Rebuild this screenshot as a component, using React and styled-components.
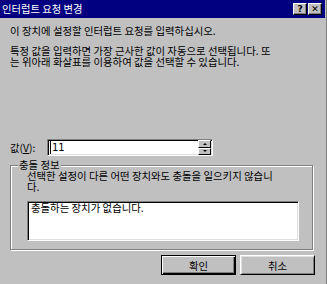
import React from "react"
import styled, { createGlobalStyle } from "styled-components"

const GlobalStyle = createGlobalStyle`
  html, body {
    margin: 0;
    padding: 0;
    background: #c0c0c0;
  }
  * {
    box-sizing: border-box;
  }
`

const font = `"Noto Sans CJK KR", "DejaVu Sans", sans-serif`

const Window = styled.div`
  width: 327px;
  height: 284px;
  background: #c0c0c0;
  border-right: 1px solid #808080;
  display: flex;
  flex-direction: column;
  font-family: ${font};
  font-size: 10.4px;
  color: #000;
  overflow: hidden;
`

const TitleBar = styled.div`
  height: 18px;
  margin-right: 1px;
  background: #000080;
  display: flex;
  align-items: center;
  justify-content: space-between;
  padding: 0 3px 0 2px;
`

const Title = styled.span`
  color: #fff;
  font-size: 10.3px;
  line-height: 18px;
`

const TitleButtons = styled.div`
  display: flex;
  gap: 1px;
`

const TitleButton = styled.div`
  width: 14px;
  height: 12px;
  background: #c0c0c0;
  border-top: 1px solid #fff;
  border-left: 1px solid #fff;
  border-right: 1px solid #000;
  border-bottom: 1px solid #000;
  box-shadow: inset -1px -1px 0 #808080;
  display: flex;
  align-items: center;
  justify-content: center;
  font-family: "DejaVu Sans", sans-serif;
  font-weight: bold;
  font-size: 9px;
  line-height: 1;
  color: #000;
`

const Body = styled.div`
  flex: 1;
  padding: 0 11px 0 10px;
  display: flex;
  flex-direction: column;
`

const Text = styled.p`
  margin: ${p => p.$top}px 0 0;
  line-height: 11px;
  white-space: nowrap;
`

const ValueRow = styled.div`
  margin-top: 72px;
  display: flex;
  align-items: center;
  height: 17px;
`

const ValueLabel = styled.label`
  width: 37px;
  line-height: 17px;

  u {
    text-decoration: underline;
  }
`

const Field = styled.div`
  width: 166px;
  height: 17px;
  background: #fff;
  border-top: 1px solid #808080;
  border-left: 1px solid #808080;
  border-right: 1px solid #fff;
  border-bottom: 1px solid #fff;
  box-shadow: inset 1px 1px 0 #000, inset -1px -1px 0 #dfdfdf;
  display: flex;
  align-items: center;
  padding: 1px 1px 1px 2px;
`

const FieldText = styled.span`
  flex: 1;
  font-family: "DejaVu Sans", sans-serif;
  font-size: 10px;
  line-height: 13px;
  padding-left: 1px;
  border-left: 1px solid #000;
`

const Spin = styled.div`
  display: flex;
  flex-direction: column;
  width: 13px;
  height: 15px;
`

const SpinButton = styled.div`
  flex: 1;
  background: #c0c0c0;
  border-top: 1px solid #fff;
  border-left: 1px solid #fff;
  border-right: 1px solid #000;
  border-bottom: 1px solid #000;
  display: flex;
  align-items: center;
  justify-content: center;

  &::after {
    content: "";
    border-left: 2px solid transparent;
    border-right: 2px solid transparent;
    ${p => p.$down ? "border-top: 2px solid #000;" : "border-bottom: 2px solid #000;"}
  }
`

const Group = styled.fieldset`
  position: relative;
  margin: 9px 0 0;
  width: 303px;
  height: 85px;
  padding: 5px 0 0 16px;
  border: 1px solid #808080;
  box-shadow: inset 1px 1px 0 #fff, 1px 1px 0 #fff;
`

const GroupLabel = styled.span`
  position: absolute;
  top: -6px;
  left: 7px;
  padding: 0 1px;
  background: #c0c0c0;
  line-height: 10px;
`

const GroupText = styled.p`
  margin: 0;
  line-height: 10.5px;
  white-space: nowrap;
`

const TextBox = styled.div`
  margin-top: 9px;
  width: 272px;
  height: 40px;
  background: #fff;
  border-top: 1px solid #808080;
  border-left: 1px solid #808080;
  border-right: 1px solid #fff;
  border-bottom: 1px solid #fff;
  box-shadow: inset 1px 1px 0 #000, inset -1px -1px 0 #dfdfdf;
  padding: 0 3px;
  line-height: 11px;
`

const Buttons = styled.div`
  margin-top: 5px;
  display: flex;
  justify-content: flex-end;
  gap: 4px;
`

const Button = styled.button`
  width: 75px;
  height: 20px;
  padding: 0;
  background: #c0c0c0;
  font-family: ${font};
  font-size: 10.4px;
  color: #000;
  border: 1px solid;
  border-color: ${p => p.$default ? "#000" : "#fff #000 #000 #fff"};
  box-shadow: ${p => p.$default
    ? "inset 1px 1px 0 #fff, inset -1px -1px 0 #000, inset -2px -2px 0 #808080"
    : "inset 1px 1px 0 #dfdfdf, inset -1px -1px 0 #808080"};
`

const App = () => {
  return (
    <>
      <GlobalStyle />
      <Window>
        <TitleBar>
          <Title>인터럽트 요청 변경</Title>
          <TitleButtons>
            <TitleButton>?</TitleButton>
            <TitleButton>✕</TitleButton>
          </TitleButtons>
        </TitleBar>
        <Body>
          <Text $top={7}>이 장치에 설정할 인터럽트 요청를 입력하십시오.</Text>
          <Text $top={9}>
            특정 값을 입력하면 가장 근사한 값이 자동으로 선택됩니다. 또<br />
            는 위아래 화살표를 이용하여 값을 선택할 수 있습니다.
          </Text>
          <ValueRow>
            <ValueLabel>값(<u>V</u>):</ValueLabel>
            <Field>
              <FieldText>11</FieldText>
              <Spin>
                <SpinButton />
                <SpinButton $down />
              </Spin>
            </Field>
          </ValueRow>
          <Group>
            <GroupLabel>충돌 정보</GroupLabel>
            <GroupText>
              선택한 설정이 다른 어떤 장치와도 충돌을 일으키지 않습니<br />
              다.
            </GroupText>
            <TextBox>충돌하는 장치가 없습니다.</TextBox>
          </Group>
          <Buttons>
            <Button $default>확인</Button>
            <Button>취소</Button>
          </Buttons>
        </Body>
      </Window>
    </>
  )
}

export default App
